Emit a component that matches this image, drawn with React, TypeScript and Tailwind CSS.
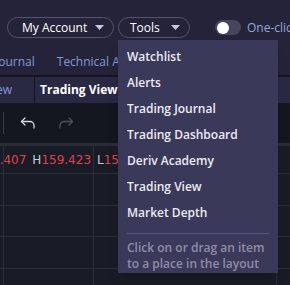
import React from 'react';

const menuItems = [
  'Watchlist',
  'Alerts',
  'Trading Journal',
  'Trading Dashboard',
  'Deriv Academy',
  'Trading View',
  'Market Depth',
];

const Caret = () => (
  <svg width="9" height="5" viewBox="0 0 9 5" className="fill-[#c8c8d8]">
    <path d="M0 0h9L4.5 5z" />
  </svg>
);

export default function App() {
  return (
    <div
      className="relative w-[290px] h-[285px] overflow-hidden bg-[#191b26] text-[12px]"
      style={{ fontFamily: '"Open Sans", "Noto Sans", sans-serif' }}
    >
      {/* Header */}
      <div className="bg-[#24233a] h-[75px] flex flex-col">
        <div className="flex items-center pt-[17px] pl-[7px] gap-[4px] whitespace-nowrap">
          <button className="h-[21px] w-[107px] shrink-0 rounded-full border border-[#55546e] flex items-center justify-between pl-[14px] pr-[9px] text-white">
            <span>My Account</span>
            <Caret />
          </button>
          <button className="h-[21px] w-[72px] shrink-0 rounded-full border border-[#55546e] flex items-center justify-between pl-[11px] pr-[9px] text-white">
            <span>Tools</span>
            <Caret />
          </button>
          <div className="ml-[21px] flex items-center gap-[6px]">
            <div className="w-[26px] h-[15px] shrink-0 rounded-full bg-[#46455f] flex items-center pl-[2px]">
              <div className="w-[12px] h-[12px] rounded-full bg-white" />
            </div>
            <span className="text-[#9aa3d6]">One-click</span>
          </div>
        </div>
        <div className="flex items-center h-[26px] mt-[11px] text-[#8797d6] whitespace-nowrap">
          <span className="-ml-[5px]">Journal</span>
          <span className="ml-[22px]">Technical Analysis</span>
          <span className="ml-[30px]">Watchlist</span>
        </div>
      </div>

      {/* Tabs row */}
      <div className="h-[2px] bg-[#14151f]" />
      <div className="flex h-[26px] bg-[#2a2944] items-center whitespace-nowrap">
        <div className="w-[35px] h-full flex items-center justify-end pr-[22px] border-r border-[#14151f] text-[#8797d6] overflow-hidden">
          <span className="shrink-0">View</span>
        </div>
        <span className="ml-[5px] font-bold text-white">Trading View</span>
      </div>

      {/* Toolbar */}
      <div className="h-[40px] bg-[#141620] flex items-center">
        <div className="ml-[3px] w-px h-[22px] bg-[#3a3c4a]" />
        <svg width="16" height="14" viewBox="0 0 16 14" fill="none" className="ml-[16px] stroke-[#d6d8e2]" strokeWidth="1.3" strokeLinecap="round" strokeLinejoin="round">
          <path d="M5 2L1.5 5.5 5 9" />
          <path d="M1.5 5.5H10a4 4 0 0 1 4 4V12" />
        </svg>
        <svg width="16" height="14" viewBox="0 0 16 14" fill="none" className="ml-[22px] stroke-[#4e5060]" strokeWidth="1.3" strokeLinecap="round" strokeLinejoin="round">
          <path d="M11 2l3.5 3.5L11 9" />
          <path d="M14.5 5.5H6a4 4 0 0 0-4 4V12" />
        </svg>
      </div>
      <div className="h-[3px] bg-[#2a2c38]" />

      {/* Price row */}
      <div className="h-[28px] flex items-center whitespace-nowrap border-b border-[#2c2e3c] text-[12px]" style={{ fontFamily: '"DejaVu Sans", sans-serif' }}>
        <span className="-ml-[8px] text-[#e0404e]">9.407</span>
        <span className="ml-[6px] text-[#c8cad4]">H</span>
        <span className="text-[#e0404e]">159.423</span>
        <span className="ml-[6px] text-[#c8cad4]">L</span>
        <span className="text-[#e0404e]">159.400</span>
        <span className="ml-[8px] text-[#e0404e]">C159.400</span>
      </div>

      {/* Chart grid */}
      <div>
        <div className="h-[32px] border-b border-[#2c2e3c]" />
        <div className="h-[31px] border-b border-[#2c2e3c]" />
        <div className="h-[32px] border-b border-[#2c2e3c]" />
        <div className="h-[32px]" />
      </div>
      <div className="absolute left-[3px] top-[145px] bottom-0 w-px bg-[#2c2e3c]" />
      <div className="absolute left-[93px] top-[145px] bottom-0 w-px bg-[#2c2e3c]" />
      <div className="absolute left-[276px] top-[145px] bottom-0 w-px bg-[#2c2e3c]" />

      {/* Tools dropdown */}
      <div className="absolute left-[118px] top-[40px] w-[160px] h-[233px] bg-[#3a395a] shadow-lg pt-[4px] px-[9px]">
        <ul className="flex flex-col">
          {menuItems.map((item) => (
            <li key={item} className="h-[26px] flex items-center font-semibold text-[#eceaf4]">
              {item}
            </li>
          ))}
        </ul>
        <div className="mt-[7px] h-px bg-[#57567a]" />
        <p className="mt-[6px] text-[#8e8ca8] leading-[16px] font-semibold">
          Click on or drag an item to a place in the layout
        </p>
      </div>
    </div>
  );
}
